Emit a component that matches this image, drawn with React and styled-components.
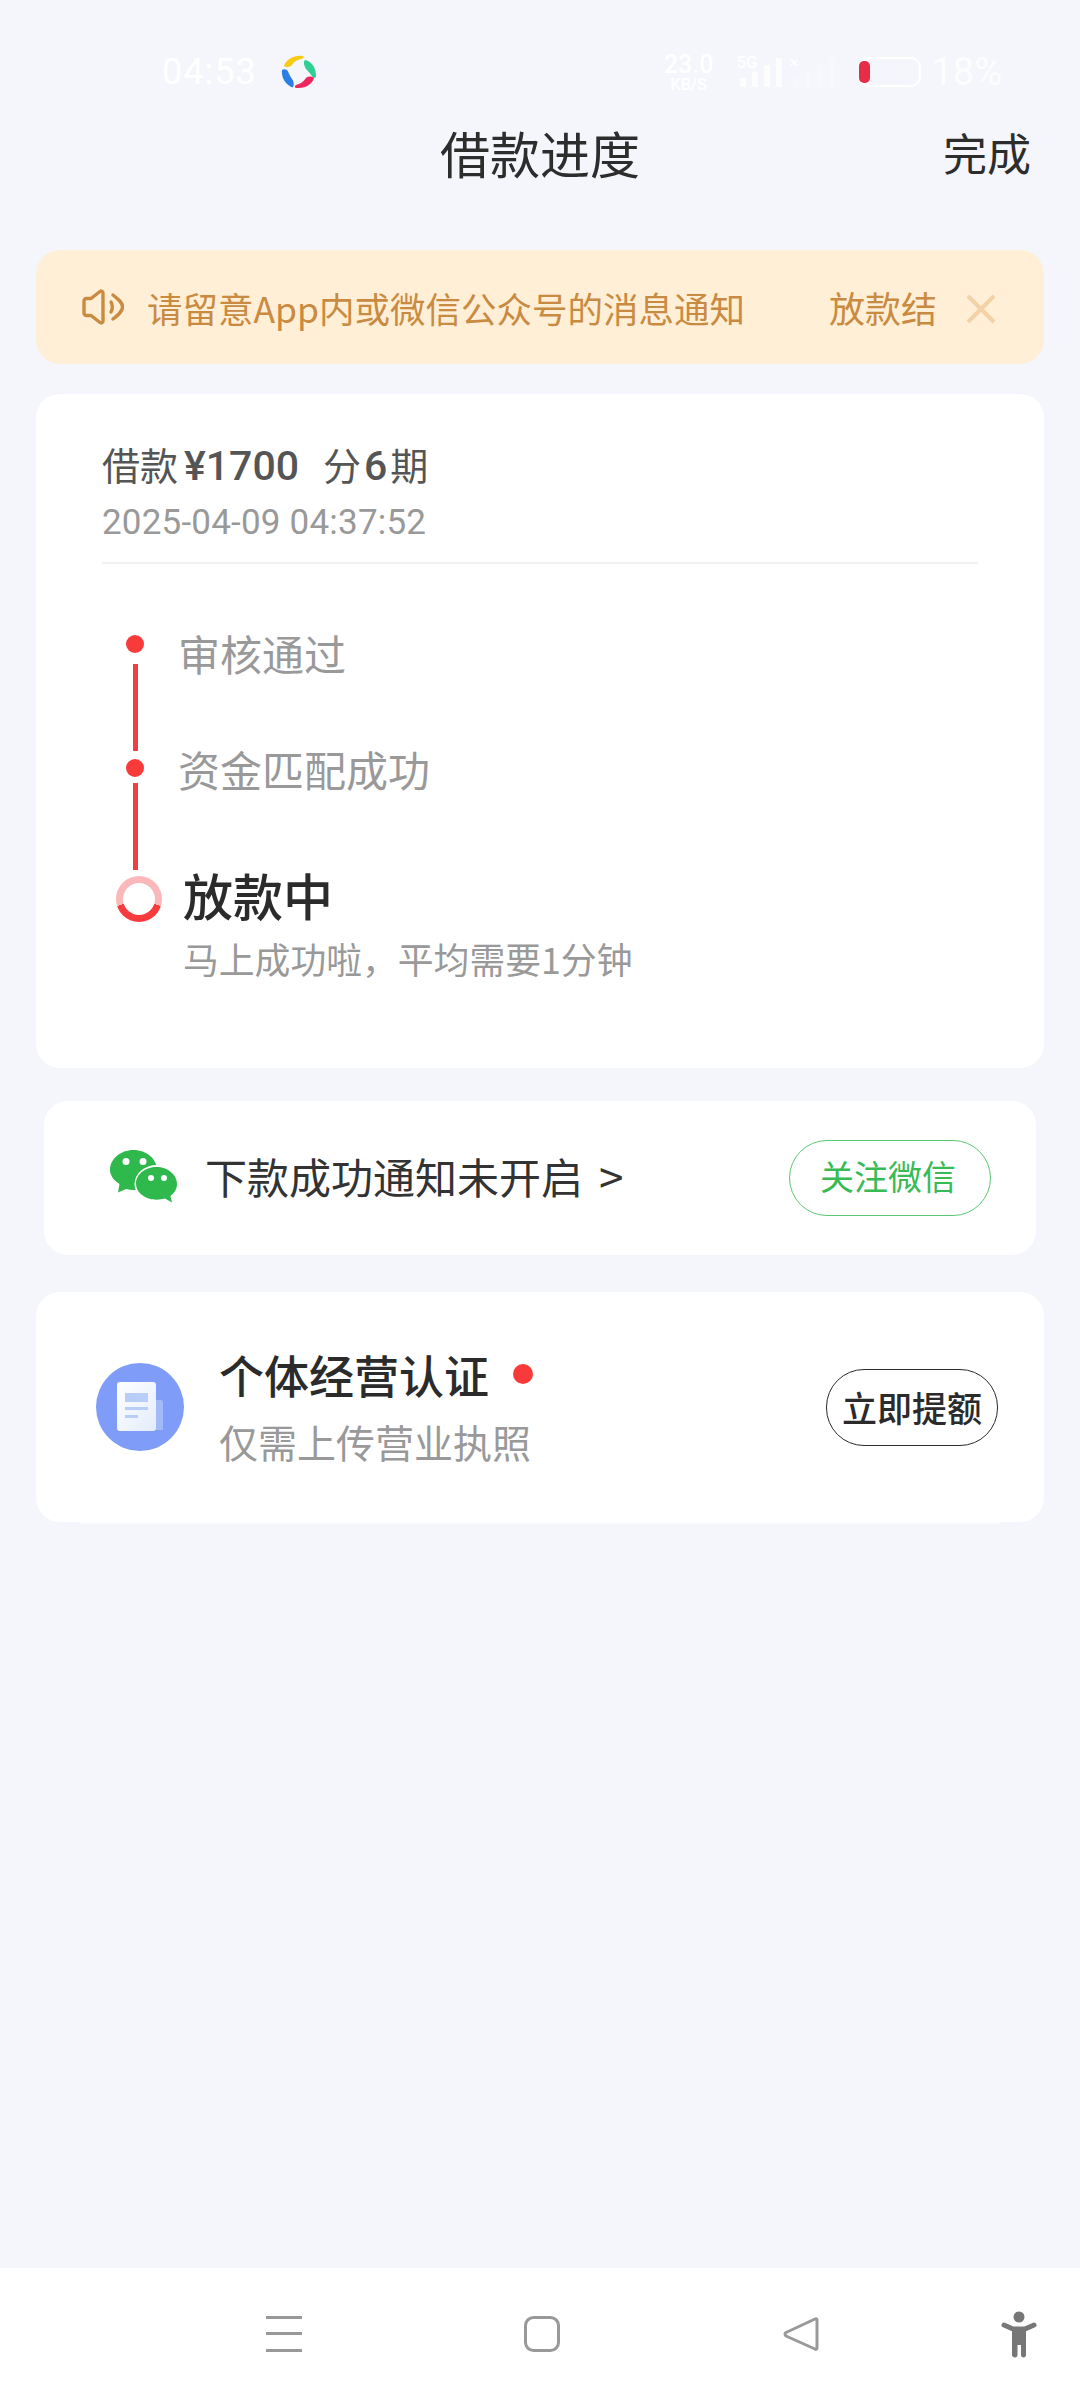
import React from "react";
import styled, { createGlobalStyle } from "styled-components";

const GlobalStyle = createGlobalStyle`
  html, body {
    margin: 0;
    padding: 0;
    background: #f4f6fb;
  }
  body {
    font-family: Roboto, "Noto Sans CJK SC", sans-serif;
  }
  * {
    box-sizing: border-box;
  }
`;

const cjk = `"Noto Sans CJK SC", "Noto Sans", sans-serif`;

const SpeakerIcon = () => (
  <svg width="42" height="36" viewBox="0 0 42 36" fill="none" stroke="#c98b41" strokeWidth="3.4" strokeLinejoin="round" strokeLinecap="round">
    <path d="M2 12c0-1.500 1-2.500 2.500-2.500H9L18 2.500c1.200-.9 3-.2 3 1.500v28c0 1.700-1.800 2.400-3 1.500L9 26.500H4.500C3 26.500 2 25.500 2 24z" />
    <path d="M29 13c1.600 3 1.600 7 0 10" />
    <path d="M31 6c6.500 5 9.500 8 9.500 12S37.500 25 31 30" />
  </svg>
);

const CloseIcon = () => (
  <svg width="30" height="30" viewBox="0 0 30 30" stroke="#f3d2a8" strokeWidth="4">
    <path d="M2 2l26 26M28 2L2 28" />
  </svg>
);

const AppLogo = () => (
  <svg width="36" height="36" viewBox="0 0 36 36">
    <path d="M3 12C5 6 12 1 22 2c1 .6.800 1.800-.5 2.500C17 6 13 7 11 11c-1.500 2-6 3-8 1z" fill="#f7ca14" />
    <path d="M24 6c6 1 11 7 11 16 0 2-2 2.500-3.500 1-1.500-3-4-5-6.500-8-1.800-3-3-7-1-9z" fill="#2fcf94" />
    <path d="M33 24c-1 5-8 11-18 10-1.500-.5-1.500-2 0-3 4-1 7-3 10-7 2-2 6-2 8 0z" fill="#f0265f" />
    <path d="M1 16c2-1.500 5-.5 6 1.500 1 3 3 6 5 9 1 2.500 1 6-.5 7C5 31 0 24 1 16z" fill="#2a7fe6" />
  </svg>
);

const SignalIcon = ({ level }) => (
  <svg width="44" height="30" viewBox="0 0 44 30" fill="#ffffff" opacity={level}>
    <rect x="1" y="21" width="6" height="9" />
    <rect x="13" y="15" width="6" height="15" />
    <rect x="25" y="8" width="6" height="22" />
    <rect x="37" y="1" width="6" height="29" />
  </svg>
);

const WechatIcon = () => (
  <svg width="68" height="56" viewBox="0 0 68 56">
    <path d="M23.500 0C36.500 0 47 9 47 20c0 11-10.500 20-23.500 20-2.500 0-5-.3-7.300-1L8 42.500 9.500 34C3.800 30.300 0 25.500 0 20 0 9 10.500 0 23.500 0z" fill="#2fb94c" />
    <ellipse cx="47" cy="34" rx="22.500" ry="19" fill="#fff" />
    <path d="M46.500 17C57.500 17 67 24.500 67 34c0 5-2.600 9-6.600 12l1.600 6.500-7-4c-2.600.7-5.300 1.200-8.500 1.200C35.500 49.700 26 42.800 26 33.500 26 24.300 35.500 17 46.500 17z" fill="#2fb94c" />
    <circle cx="16" cy="11.500" r="3.500" fill="#fff" />
    <circle cx="33" cy="11.500" r="3.500" fill="#fff" />
    <circle cx="41" cy="28" r="3" fill="#fff" />
    <circle cx="54" cy="28" r="3" fill="#fff" />
  </svg>
);

const LicenseIcon = () => (
  <svg width="88" height="88" viewBox="0 0 88 88">
    <defs>
      <linearGradient id="sheet" x1="0" y1="0" x2="1" y2="1">
        <stop offset="0" stopColor="#ffffff" />
        <stop offset="1" stopColor="#e3ecfd" />
      </linearGradient>
    </defs>
    <circle cx="44" cy="44" r="44" fill="#7f9df8" />
    <path d="M58 37h7c1 0 2 1 2 2v28H58z" fill="#a3baf9" />
    <rect x="21" y="19" width="39" height="49" rx="3" fill="url(#sheet)" />
    <rect x="29" y="30" width="23" height="9" fill="#b9cdf9" />
    <rect x="29" y="44" width="23" height="3" fill="#b9cdf9" />
    <rect x="29" y="52" width="13" height="3" fill="#b9cdf9" />
  </svg>
);

const MenuIcon = () => (
  <svg width="36" height="36" viewBox="0 0 36 36" fill="#999">
    <rect x="0" y="0" width="36" height="3" />
    <rect x="0" y="16" width="36" height="3" />
    <rect x="0" y="33" width="36" height="3" />
  </svg>
);

const HomeIcon = () => (
  <svg width="36" height="36" viewBox="0 0 36 36" fill="none" stroke="#999" strokeWidth="3">
    <rect x="1.500" y="1.500" width="33" height="33" rx="8" />
  </svg>
);

const BackIcon = () => (
  <svg width="36" height="36" viewBox="0 0 36 36" fill="none" stroke="#999" strokeWidth="3" strokeLinejoin="round">
    <path d="M32 3c1-.7 2-.2 2 1v28c0 1.200-1 1.800-2 1L3 20c-1.300-1-1.300-2.500 0-3.500z" />
  </svg>
);

const PersonIcon = () => (
  <svg width="36" height="48" viewBox="0 0 36 48" fill="#777">
    <circle cx="18" cy="6" r="5.500" />
    <path d="M3 14l9 4h12l9-4" fill="none" stroke="#777" strokeWidth="5" strokeLinecap="round" strokeLinejoin="round" />
    <path d="M11 17h14v27c0 1.500-1 2.500-2.500 2.500S20 45.500 20 44V34h-3.500v10c0 1.500-1 2.500-2.500 2.500S11 45.500 11 44z" />
  </svg>
);

const Page = styled.div`
  width: 1080px;
  height: 2400px;
  display: flex;
  flex-direction: column;
  background: #f4f6fb;
  overflow: hidden;
`;

const StatusBar = styled.div`
  height: 44px;
  margin-top: 50px;
  padding: 0 78px 0 162px;
  display: flex;
  align-items: center;
  color: #fff;
`;

const Clock = styled.span`
  font-size: 36px;
  letter-spacing: 1px;
  margin-right: 24px;
`;

const Speed = styled.span`
  margin-left: auto;
  display: flex;
  flex-direction: column;
  align-items: center;
  font-size: 25px;
  line-height: 24px;
  font-weight: 500;

  small {
    font-size: 16px;
    line-height: 15px;
  }
`;

const NetWrap = styled.span`
  position: relative;
  margin-left: ${(p) => p.$left}px;
  display: flex;
`;

const NetLabel = styled.span`
  position: absolute;
  left: -3px;
  top: -5px;
  font-size: 17px;
  font-weight: 500;
`;

const Battery = styled.span`
  width: 62px;
  height: 30px;
  margin-left: 23px;
  border: 2px solid #fff;
  border-radius: 10px;
  position: relative;
  display: block;

  &::before {
    content: "";
    position: absolute;
    left: -2px;
    top: 2px;
    width: 11px;
    height: 22px;
    border-radius: 5px;
    background: #e72c46;
  }
`;

const BatteryText = styled.span`
  margin-left: 10px;
  font-size: 38px;
  opacity: 0.85;
`;

const TitleBar = styled.div`
  display: grid;
  grid-template-columns: 1fr auto 1fr;
  align-items: center;
  height: 60px;
  margin-top: 26px;
  padding: 0 49px;
`;

const Title = styled.div`
  grid-column: 2;
  font-family: ${cjk};
  font-size: 50px;
  line-height: 60px;
  color: #2d2d2d;
  white-space: nowrap;
`;

const Done = styled.div`
  grid-column: 3;
  justify-self: end;
  font-family: ${cjk};
  font-size: 44px;
  color: #2d2d2d;
`;

const Banner = styled.div`
  margin: 70px 36px 0;
  height: 114px;
  padding: 0 48px 0 46px;
  border-radius: 24px;
  background: #ffefd7;
  display: flex;
  align-items: center;
  color: #c98b41;
  font-family: ${cjk};
  font-size: 35.500px;
  white-space: nowrap;
`;

const BannerText = styled.span`
  margin-left: 23px;
  width: 682px;
`;

const BannerClip = styled.span`
  width: 107px;
  overflow: hidden;
  font-size: 36px;
`;

const BannerClose = styled.span`
  margin: 3px 0 0 auto;
  display: flex;
`;

const Card = styled.section`
  margin: ${(p) => p.$top}px 36px 0;
  background: #fff;
  border-radius: 24px;
`;

const ProgressCard = styled(Card)`
  padding: 51px 66px 92px 66px;
`;

const Amount = styled.div`
  display: flex;
  align-items: baseline;
  font-family: ${cjk};
  font-size: 38px;
  line-height: 38px;
  color: #555;
`;

const AmountNum = styled.span`
  font-family: Roboto, sans-serif;
  font-size: 41px;
  font-weight: 500;
  margin: 0 ${(p) => p.$side}px;
`;

const Spaced = styled.span`
  margin-left: 18px;
`;

const DateText = styled.div`
  margin-top: 21px;
  font-size: 35px;
  line-height: 34px;
  letter-spacing: 0.200px;
  color: #999;
`;

const Divider = styled.div`
  margin: 22px 0 71px;
  height: 2px;
  background: #f1f2f4;
`;

const Step = styled.div`
  display: flex;
  margin-left: 13px;
`;

const Marker = styled.div`
  width: 48px;
  flex: none;
  display: flex;
  flex-direction: column;
  align-items: center;
  padding-right: 8px;
`;

const Dot = styled.span`
  width: 18px;
  height: 18px;
  border-radius: 50%;
  background: #f93a3b;
`;

const Line = styled.span`
  width: 5px;
  height: 87px;
  margin: ${(p) => p.$top}px 0 ${(p) => p.$bottom}px;
  background: #ee3f45;
`;

const Ring = styled.span`
  width: 46px;
  height: 46px;
  margin-right: -8px;
  flex: none;
  border-radius: 50%;
  background: conic-gradient(from 252deg, #fbb8ba 0 216deg, #f73b3d 216deg 360deg);
  display: flex;
  align-items: center;
  justify-content: center;

  &::after {
    content: "";
    width: 32px;
    height: 32px;
    border-radius: 50%;
    background: #fff;
  }
`;

const StepLabel = styled.div`
  margin: ${(p) => p.$top}px 0 0 15px;
  font-family: ${cjk};
  font-size: 42px;
  line-height: 42px;
  color: #999;
`;

const StepBody = styled.div`
  margin: -7px 0 0 20px;
`;

const StepTitle = styled.div`
  font-family: ${cjk};
  font-size: 50px;
  line-height: 50px;
  font-weight: 500;
  color: #2b2b2b;
`;

const StepNote = styled.div`
  margin-top: 21px;
  font-family: ${cjk};
  font-size: 35.800px;
  line-height: 36px;
  color: #999;
`;

const WechatCard = styled.section`
  margin: 33px 44px 0;
  height: 154px;
  padding: 0 45px 0 66px;
  background: #fff;
  border-radius: 24px;
  display: flex;
  align-items: center;
`;

const WechatText = styled.div`
  margin: -6px 0 0 27px;
  font-family: ${cjk};
  font-size: 42px;
  color: #333;
  white-space: nowrap;
`;

const Chevron = styled.span`
  margin-left: 16px;
  font-size: 44px;
`;

const Pill = styled.div`
  margin-left: auto;
  display: flex;
  align-items: center;
  justify-content: center;
  font-family: ${cjk};
  white-space: nowrap;
  border-radius: 38px;
`;

const FollowButton = styled(Pill)`
  width: 202px;
  height: 76px;
  padding: 0 4px 5px 0;
  border: 1.500px solid #5cc873;
  color: #38bb55;
  font-size: 34px;
`;

const QuotaCard = styled(Card)`
  position: relative;
  height: 230px;
  padding: 0 46px 0 60px;
  display: flex;
  align-items: center;

  &::after {
    content: "";
    position: absolute;
    left: 44px;
    right: 44px;
    bottom: -2px;
    height: 2px;
    background: #fbfcfe;
  }
`;

const QuotaBody = styled.div`
  margin: 0 0 0 35px;
`;

const QuotaTitleRow = styled.div`
  display: flex;
  align-items: center;
`;

const QuotaTitle = styled.div`
  font-family: ${cjk};
  font-size: 45px;
  line-height: 50px;
  font-weight: 500;
  color: #2b2b2b;
`;

const RedDot = styled.span`
  width: 20px;
  height: 20px;
  margin: 0 0 2px 24px;
  border-radius: 50%;
  background: #f93a3b;
`;

const QuotaNote = styled.div`
  margin-top: 17px;
  font-family: ${cjk};
  font-size: 39px;
  line-height: 48px;
  color: #999;
`;

const QuotaButton = styled(Pill)`
  width: 172px;
  height: 77px;
  padding-bottom: 2px;
  border: 1.500px solid #2b2b2b;
  color: #2b2b2b;
  font-size: 35px;
  font-weight: 500;
`;

const NavBar = styled.nav`
  margin-top: auto;
  height: 132px;
  padding: 43px 45px 0 266px;
  background: #fff;
  display: flex;
  align-items: flex-start;
`;

const NavSlot = styled.span`
  display: flex;
  margin-right: ${(p) => p.$gap}px;
  margin-top: ${(p) => p.$top || 0}px;
`;

export default function App() {
  return (
    <Page>
      <GlobalStyle />
      <StatusBar>
        <Clock>04:53</Clock>
        <AppLogo />
        <Speed>
          23.0
          <small>KB/S</small>
        </Speed>
        <NetWrap $left={26}>
          <NetLabel>5G</NetLabel>
          <SignalIcon level={0.85} />
        </NetWrap>
        <NetWrap $left={9}>
          <NetLabel>×</NetLabel>
          <SignalIcon level={0.25} />
        </NetWrap>
        <Battery />
        <BatteryText>18%</BatteryText>
      </StatusBar>

      <TitleBar>
        <Title>借款进度</Title>
        <Done>完成</Done>
      </TitleBar>

      <Banner>
        <SpeakerIcon />
        <BannerText>请留意App内或微信公众号的消息通知</BannerText>
        <BannerClip>放款结</BannerClip>
        <BannerClose>
          <CloseIcon />
        </BannerClose>
      </Banner>

      <ProgressCard $top={30}>
        <Amount>
          借款
          <AmountNum $side={6}>¥1700</AmountNum>
          <Spaced>分</Spaced>
          <AmountNum $side={3}>6</AmountNum>
          期
        </Amount>
        <DateText>2025-04-09 04:37:52</DateText>
        <Divider />
        <Step>
          <Marker>
            <Dot />
            <Line $top={11} $bottom={8} />
          </Marker>
          <StepLabel $top={-3}>审核通过</StepLabel>
        </Step>
        <Step>
          <Marker>
            <Dot />
            <Line $top={6} $bottom={6} />
          </Marker>
          <StepLabel $top={-11}>资金匹配成功</StepLabel>
        </Step>
        <Step>
          <Marker>
            <Ring />
          </Marker>
          <StepBody>
            <StepTitle>放款中</StepTitle>
            <StepNote>马上成功啦，平均需要1分钟</StepNote>
          </StepBody>
        </Step>
      </ProgressCard>

      <WechatCard>
        <WechatIcon />
        <WechatText>
          下款成功通知未开启<Chevron>&gt;</Chevron>
        </WechatText>
        <FollowButton>关注微信</FollowButton>
      </WechatCard>

      <QuotaCard $top={37}>
        <LicenseIcon />
        <QuotaBody>
          <QuotaTitleRow>
            <QuotaTitle>个体经营认证</QuotaTitle>
            <RedDot />
          </QuotaTitleRow>
          <QuotaNote>仅需上传营业执照</QuotaNote>
        </QuotaBody>
        <QuotaButton>立即提额</QuotaButton>
      </QuotaCard>

      <NavBar>
        <NavSlot $gap={222} $top={5}><MenuIcon /></NavSlot>
        <NavSlot $gap={223} $top={5}><HomeIcon /></NavSlot>
        <NavSlot $gap={182} $top={5}><BackIcon /></NavSlot>
        <NavSlot $gap={0}><PersonIcon /></NavSlot>
      </NavBar>
    </Page>
  );
}
